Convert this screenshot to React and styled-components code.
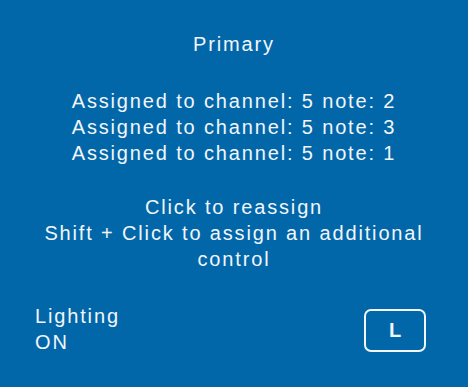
import React from 'react'
import styled, { createGlobalStyle } from 'styled-components'

const Global = createGlobalStyle`
  html, body {
    margin: 0;
    padding: 0;
    background: #0267a9;
  }
`

const Panel = styled.div`
  width: 468px;
  height: 387px;
  box-sizing: border-box;
  padding-top: 31px;
  display: flex;
  flex-direction: column;
  background: #0267a9;
  color: #f2f6fa;
  font-family: "Liberation Sans", Arial, sans-serif;
  font-size: 20px;
  line-height: 26px;
  letter-spacing: 1.85px;
`

const Block = styled.div`
  text-align: center;
  padding: 0 20px;
  margin-top: ${props => props.gap || 0}px;
`

const Line = styled.div``

const Footer = styled.div`
  margin-top: 31px;
  display: flex;
  justify-content: space-between;
  align-items: center;
  padding: 0 42px 0 35px;
`

const Status = styled.div`
  display: flex;
  flex-direction: column;
`

const KeyButton = styled.div`
  width: 62px;
  height: 43px;
  box-sizing: border-box;
  border: 2px solid #f2f6fa;
  border-radius: 7px;
  display: flex;
  justify-content: center;
  align-items: center;
  font-weight: 700;
  letter-spacing: 0;
  margin-top: 2px;
`

const assignments = [
  { channel: 5, note: 2 },
  { channel: 5, note: 3 },
  { channel: 5, note: 1 },
]

export default function App() {
  return (
    <>
      <Global />
      <Panel>
        <Block>Primary</Block>
        <Block gap={31}>
          {assignments.map((a, i) => (
            <Line key={i}>Assigned to channel: {a.channel} note: {a.note}</Line>
          ))}
        </Block>
        <Block gap={28}>
          <Line>Click to reassign</Line>
          <Line>Shift + Click to assign an additional control</Line>
        </Block>
        <Footer>
          <Status>
            <span>Lighting</span>
            <span>ON</span>
          </Status>
          <KeyButton>L</KeyButton>
        </Footer>
      </Panel>
    </>
  )
}
